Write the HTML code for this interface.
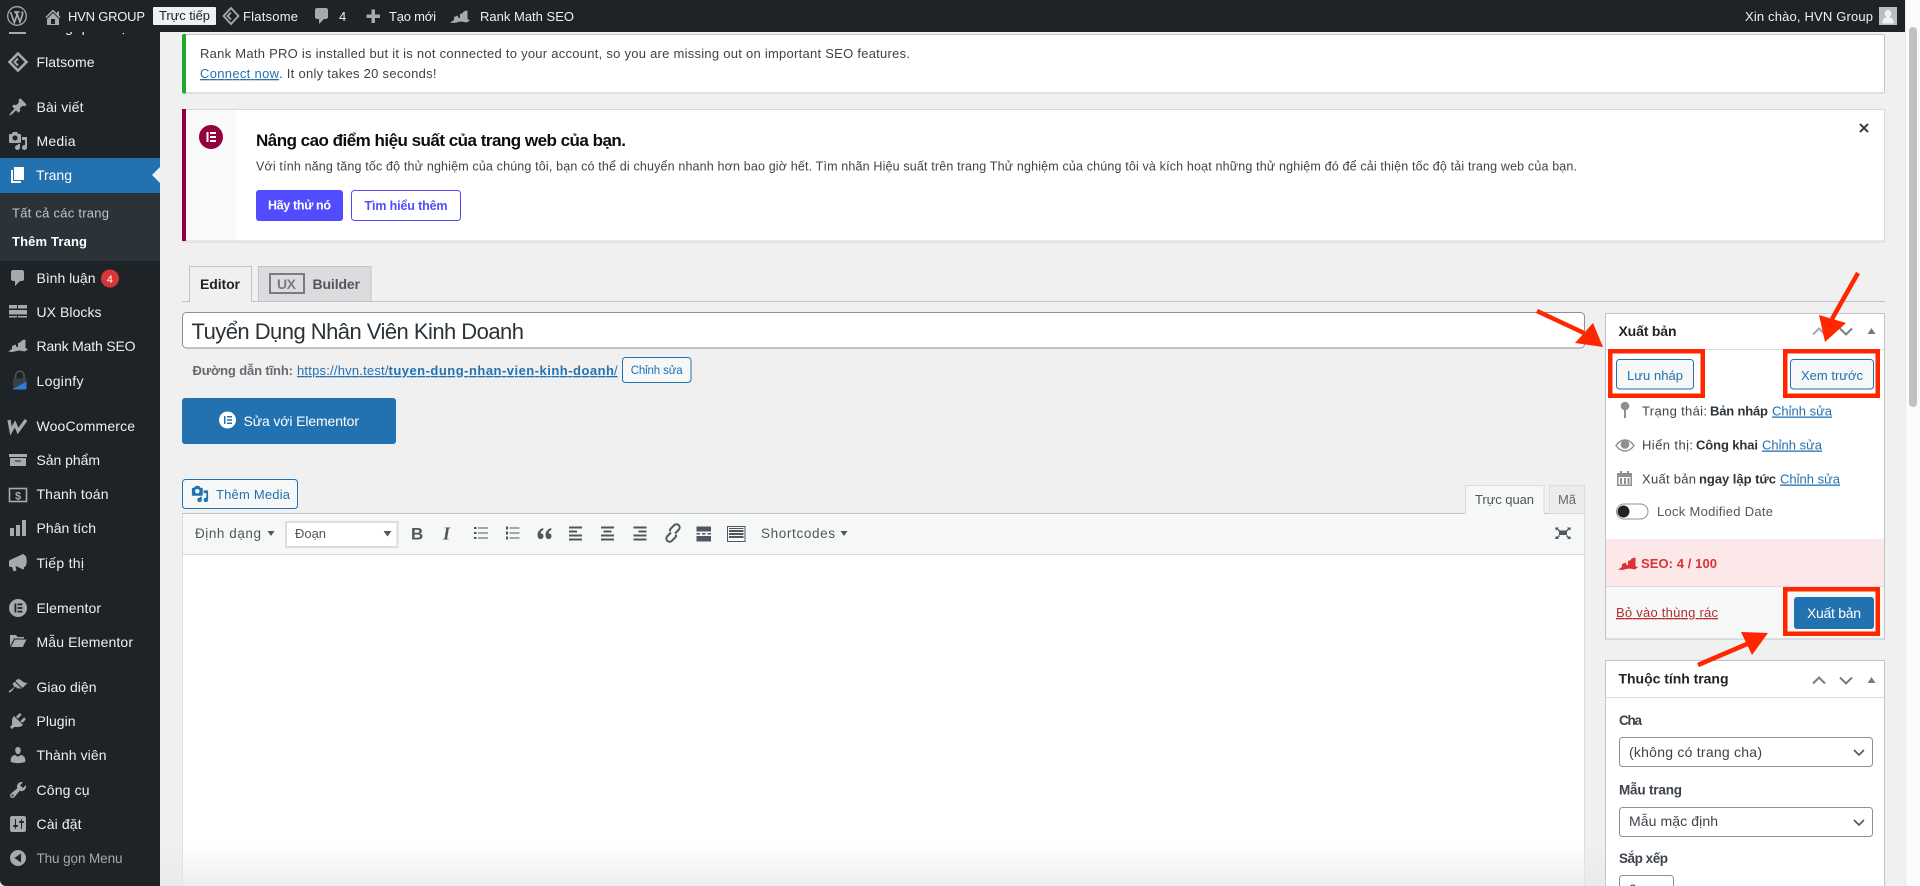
<!DOCTYPE html>
<html lang="vi">
<head>
<meta charset="utf-8">
<title>Thêm Trang</title>
<style>
html,body{margin:0;padding:0;width:1920px;height:886px;overflow:hidden;background:#f0f0f1}
svg{display:block}
text{font-family:"Liberation Sans","Noto Sans CJK SC",sans-serif;font-size:14px;fill:#3c434a}
.m{fill:#f0f0f1}
.bar{font-size:13px;fill:#f0f0f1}
.n{font-size:13px;fill:#3c434a}
.b{font-weight:bold}
.l{fill:#2271b1;text-decoration:underline}
.bt{fill:#2271b1;font-size:13px}
.ic{fill:#a7aaad}
.tb{fill:#50575e}
</style>
</head>
<body>
<svg width="1920" height="886" viewBox="0 0 1920 886" xmlns="http://www.w3.org/2000/svg">
<defs>
<linearGradient id="fade" x1="0" y1="0" x2="0" y2="1"><stop offset="0" stop-color="#e8e8e8" stop-opacity="0"/><stop offset="1" stop-color="#e8e8e8" stop-opacity=".75"/></linearGradient>
</defs>
<rect width="1920" height="886" fill="#f0f0f1"/>

<!-- sidebar -->
<rect x="0" y="0" width="160" height="886" fill="#1d2327"/>
<text class="m" x="36" y="32" textLength="89">Trang quản trị</text>
<rect x="9" y="30" width="17" height="4" class="ic"/>
<rect x="0" y="158" width="160" height="35" fill="#2271b1"/>
<polygon points="160,167 152,175 160,183" fill="#f0f0f1"/>
<rect x="0" y="193" width="160" height="68" fill="#2c3338"/>

<text class="m" x="36.5" y="67" textLength="58">Flatsome</text>
<text class="m" x="36.5" y="112" textLength="47">Bài viết</text>
<text class="m" x="36.5" y="146" textLength="39">Media</text>
<text x="36" y="180" textLength="36" style="fill:#fff">Trang</text>
<text x="12" y="217.5" textLength="97" style="font-size:13px;fill:#c3c4c7">Tất cả các trang</text>
<text x="12" y="246" textLength="75" class="b" style="font-size:13px;fill:#fff">Thêm Trang</text>
<text class="m" x="36.5" y="283" textLength="59">Bình luận</text>
<circle cx="110" cy="278.5" r="9" fill="#d63638"/>
<text x="106.8" y="283" textLength="6.5" style="font-size:11px;fill:#fff">4</text>
<text class="m" x="36.5" y="317" textLength="65">UX Blocks</text>
<text class="m" x="36.5" y="351" textLength="99">Rank Math SEO</text>
<text class="m" x="36.5" y="386" textLength="47">Loginfy</text>
<text class="m" x="36.5" y="431" textLength="98.5">WooCommerce</text>
<text class="m" x="36.5" y="465" textLength="63.5">Sản phẩm</text>
<text class="m" x="36.5" y="499" textLength="72">Thanh toán</text>
<text class="m" x="36.5" y="533" textLength="59.5">Phân tích</text>
<text class="m" x="36.5" y="568" textLength="47.5">Tiếp thị</text>
<text class="m" x="36.5" y="613" textLength="64.5">Elementor</text>
<text class="m" x="36.5" y="647" textLength="96.5">Mẫu Elementor</text>
<text class="m" x="36.5" y="692" textLength="60">Giao diện</text>
<text class="m" x="36.5" y="726" textLength="39">Plugin</text>
<text class="m" x="36.5" y="760" textLength="70">Thành viên</text>
<text class="m" x="36.5" y="795" textLength="53">Công cụ</text>
<text class="m" x="36.5" y="829" textLength="45">Cài đặt</text>
<text x="36.5" y="863" textLength="86" style="font-size:13.5px;fill:#a7aaad">Thu gọn Menu</text>

<!-- sidebar icons -->
<g fill="none" stroke="#a7aaad" stroke-width="2.600"><path d="M18 53.500l8.500 8.500-8.500 8.500-8.500-8.500z"/><path d="M18 58.500l-3.500 3.500 3.500 3.500" stroke-width="2"/></g>
<path class="ic" transform="translate(8,97)" d="M10.44 3.02l1.82-1.82 6.35 6.35-1.83 1.82c-1.05-.68-2.48-.57-3.41.36l-.75.75c-.92.93-1.04 2.35-.35 3.41l-1.83 1.82-2.41-2.41-2.8 2.79c-.42.42-3.38 2.71-3.8 2.29s1.86-3.39 2.28-3.81l2.79-2.79L4.1 9.36l1.83-1.82c1.05.69 2.48.57 3.41-.36l.75-.75c.93-.92 1.05-2.35.35-3.41z"/>
<path class="ic" transform="translate(8,131)" d="M13 11V4c0-.55-.45-1-1-1h-1.67L9 1H5L3.67 3H2c-.55 0-1 .45-1 1v7c0 .55.45 1 1 1h10c.55 0 1-.45 1-1zM7 4.5c1.38 0 2.5 1.12 2.5 2.5S8.38 9.5 7 9.5 4.5 8.38 4.5 7 5.62 4.5 7 4.5zM14 6h5v10.5c0 1.38-1.12 2.5-2.5 2.5S14 17.88 14 16.5s1.12-2.5 2.5-2.5c.17 0 .34.02.5.05V9h-3V6zm-4 8.05V13h2v3.5c0 1.38-1.12 2.5-2.5 2.5S7 17.88 7 16.5 8.12 14 9.5 14c.17 0 .34.02.5.05z"/>
<path transform="translate(8,165)" fill="#fff" d="M6 15V2h10v13H6zm-1 1h8v2H3V5h2v11z"/>
<path class="ic" transform="translate(8,268)" d="M5 2h9c1.1 0 2 .9 2 2v7c0 1.1-.9 2-2 2h-2l-5 5v-5H5c-1.1 0-2-.9-2-2V4c0-1.1.9-2 2-2z"/>
<g class="ic"><rect x="9" y="305" width="8" height="3.500"/><rect x="18" y="305" width="9" height="3.500"/><rect x="9" y="310" width="18" height="4.500"/><rect x="9" y="316" width="8" height="1.500"/><rect x="18" y="316" width="9" height="1.500"/></g>
<path class="ic" d="M8 351.500l4-2.500v-3l4-1.500v2l2 .5V343l3-1v-1l3-1.500 1.500.5v8l2.500 1.500-3.500 2-5-1-3 .5-4 1z"/>
<path fill="none" stroke="#4c5157" stroke-width="1.600" d="M15.500 379v-3.500a4.300 4.300 0 0 1 8.600 0V379"/>
<path fill="#3a3f44" d="M13 378.500h13.500V389H13z"/>
<path fill="#2c7fd4" d="M12 389.500l14.500-8v8z"/>
<path d="M9 420l2 11 4-7 3 7 8-11" fill="none" stroke="#a7aaad" stroke-width="3.200"/>
<path class="ic" d="M9 454h18v3H9zM10 458h16v8H10zM15 460.500v1h6v-1z" fill-rule="evenodd"/>
<rect x="9.500" y="488.500" width="17" height="13" fill="none" stroke="#a7aaad" stroke-width="1.600"/>
<text x="15" y="499.500" textLength="6" class="b" style="font-size:11px;fill:#a7aaad">$</text>
<path class="ic" transform="translate(8,518)" d="M18 18V2h-4v16h4zm-6 0V7H8v11h4zm-6 0v-8H2v8h4z"/>
<path class="ic" d="M10 560l13-6 1 .5v14.500l-1 .5-6.500-3.300-1 .2 1 4-3 1-1.500-4.500H10.500c-1 0-1.500-.5-1.500-1.500v-4c0-.5.500-1 1-1.400zM24 555c1.700 0 2.700 2.300 2.700 6s-1 6-2.700 6z"/>
<circle cx="18" cy="608" r="9" class="ic"/>
<g fill="#1d2327"><rect x="14.500" y="603.500" width="1.800" height="9"/><rect x="17.500" y="603.500" width="5" height="1.800"/><rect x="17.500" y="607.100" width="5" height="1.800"/><rect x="17.500" y="610.700" width="5" height="1.800"/></g>
<path class="ic" d="M10 635h6l1.500 2H24v1.500H14l-3.500 7L10 646zM14.800 639.500H26.500L22.800 647H11z"/>
<path class="ic" transform="translate(8,677)" d="M14.480 11.060L7.410 3.990l1.500-1.500c.5-.56 2.300-.47 3.510.32 1.210.8 1.430 1.280 2.910 2.100 1.180.64 2.450 1.260 4.450.85zm-.71.71L6.700 4.700 4.930 6.470c-.39.39-.39 1.020 0 1.410l1.060 1.060c.39.39.39 1.030 0 1.420-.6.6-1.430 1.110-2.210 1.690-.35.26-.7.53-1.010.84C1.430 13.230.44 14.790.93 15.280s2.050-.5 3.390-1.840c.31-.31.58-.66.84-1.010.58-.78 1.090-1.610 1.690-2.210.39-.39 1.030-.39 1.420 0l1.060 1.060c.39.39 1.020.39 1.410 0z"/>
<path class="ic" transform="translate(8,711)" d="M13.110 4.360L9.870 7.600 8 5.730l3.240-3.240c.35-.34 1.050-.2 1.560.32.52.51.66 1.210.31 1.550zm-8 1.770l.91-1.120 9.010 9.010-1.190.84c-.71.71-2.630 1.160-3.820 1.160H6.140L4.900 17.260c-.59.59-1.540.59-2.120 0-.59-.58-.59-1.530 0-2.120l1.240-1.240v-3.880c0-1.130.4-3.190 1.090-3.890zm7.260 3.970l3.240-3.240c.34-.35 1.040-.21 1.550.31.52.51.66 1.210.31 1.550l-3.240 3.250z"/>
<path class="ic" transform="translate(8,745)" d="M10 9.250c-2.270 0-2.730-3.440-2.730-3.440C7 4.020 7.820 2 9.970 2c2.160 0 2.980 2.020 2.710 3.810 0 0-.41 3.440-2.680 3.440zm0 2.570L12.720 10c2.390 0 4.520 2.330 4.520 4.530v2.490s-3.650 1.130-7.240 1.130c-3.650 0-7.240-1.130-7.240-1.130v-2.490c0-2.250 1.940-4.480 4.470-4.480z"/>
<path class="ic" transform="translate(8,780)" d="M16.680 9.770c-1.340 1.340-3.300 1.670-4.950.99l-5.410 6.520c-.99.99-2.590.99-3.580 0s-.99-2.590 0-3.570l6.520-5.420c-.68-1.650-.35-3.610.99-4.950 1.280-1.280 3.120-1.620 4.720-1.060l-2.890 2.890 2.820 2.820 2.860-2.870c.53 1.580.18 3.390-1.080 4.650zM3.810 16.210c.4.39 1.040.39 1.430 0 .4-.4.4-1.040 0-1.430-.39-.4-1.030-.4-1.430 0-.39.39-.39 1.030 0 1.430z"/>
<path class="ic" transform="translate(8,814)" d="M18 16V4c0-1.100-.9-2-2-2H4c-1.100 0-2 .9-2 2v12c0 1.100.9 2 2 2h12c1.100 0 2-.9 2-2zM8 11h1c.55 0 1 .45 1 1s-.45 1-1 1H8v1.500c0 .28-.22.5-.5.5s-.5-.22-.5-.5V13H6c-.55 0-1-.45-1-1s.45-1 1-1h1V5.500c0-.28.22-.5.5-.5s.5.22.5.5V11zm5-2h-1c-.55 0-1-.45-1-1s.45-1 1-1h1V5.500c0-.28.22-.5.5-.5s.5.22.5.5V7h1c.55 0 1 .45 1 1s-.45 1-1 1h-1v5.500c0 .28-.22.5-.5.5s-.5-.22-.5-.5V9z"/>
<path class="ic" fill-rule="evenodd" d="M18 850a8 8 0 1 0 0 16 8 8 0 0 0 0-16zM21 853.500v9L14.500 858z"/>
<path d="M0 880v6h6a6 6 0 0 1-6-6z" fill="#e6e6e6"/>

<!-- admin bar -->
<rect x="0" y="0" width="1905" height="32" fill="#1d2327"/>
<rect x="1905" y="0" width="15" height="886" fill="#fbfbfb"/>
<rect x="1905" y="0" width="1" height="886" fill="#e8e8e8"/>
<rect x="1909" y="27" width="8" height="380" rx="4" fill="#c1c1c1"/>
<g fill="none" stroke="#a7aaad"><circle cx="17" cy="16" r="9.300" stroke-width="1.300"/><path d="M10.500 12l3.800 10.500 2.700-7.500-1.300-3M14 12h5.500M16.500 12l3.500 10 2.500-7.500c.4-1.300-.3-2.300-1-2.800" stroke-width="1.700"/></g>
<path class="ic" transform="translate(43,7)" d="M16 8.500l1.530 1.530-1.060 1.060L10 4.620l-6.470 6.470-1.060-1.060L10 2.500l4 4v-2h2v4zm-6-2.460l6 5.990V18H4v-5.970zM12 17v-5H8v5h4z"/>
<text class="bar" x="68" y="21" textLength="77">HVN GROUP</text>
<rect x="153" y="7" width="63" height="18" rx="1" fill="#f0f0f1"/>
<text x="159" y="20" textLength="51" style="font-size:13px;fill:#1d2327">Trực tiếp</text>
<g fill="none" stroke="#a7aaad" stroke-width="1.800"><path d="M231 8l7.500 8-7.500 8-7.500-8z"/><path d="M231 12.500l-3.500 3.500 3.500 3.500"/></g>
<text class="bar" x="243" y="21" textLength="55">Flatsome</text>
<path class="ic" transform="translate(312,6)" d="M5 2h9c1.100 0 2 .9 2 2v7c0 1.100-.9 2-2 2h-2l-5 5v-5H5c-1.100 0-2-.9-2-2V4c0-1.100.9-2 2-2z"/>
<text class="bar" x="339" y="21" textLength="8">4</text>
<path class="ic" d="M371.500 9.500h3.500v5h5v3.500h-5v5h-3.500v-5h-5v-3.500h5z"/>
<text class="bar" x="389" y="21" textLength="47">Tạo mới</text>
<path class="ic" transform="translate(442,-329)" d="M8 351.500l4-2.500v-3l4-1.500v2l2 .5V343l3-1v-1l3-1.500 1.500.5v8l2.500 1.500-3.500 2-5-1-3 .5-4 1z"/>
<text class="bar" x="480" y="21" textLength="94">Rank Math SEO</text>
<text class="bar" x="1745" y="21" textLength="128">Xin chào, HVN Group</text>
<rect x="1879" y="7" width="18" height="18" fill="#bdbdbd"/>
<path fill="#f1f1f1" d="M1888 10c2 0 3.300 1.700 3.300 3.800 0 1.500-.8 2.800-1.800 3.500 2 .5 3.800 1.500 4 3.700v2.500h-11V21c.2-2.200 2-3.200 4-3.700-1-.7-1.800-2-1.800-3.500 0-2.100 1.300-3.800 3.300-3.800z"/>

<!-- notice 1 -->
<rect x="182.500" y="34.500" width="1702" height="58.500" rx="2" fill="#fff" stroke="#c3c4c7"/>
<path d="M186 34h-2a2 2 0 0 0-2 2v55.500a2 2 0 0 0 2 2h2z" fill="#1fa82d"/>
<text class="n" x="200" y="58" textLength="710">Rank Math PRO is installed but it is not connected to your account, so you are missing out on important SEO features.</text>
<text x="200" y="78" textLength="79" class="l" style="font-size:13px">Connect now</text>
<text class="n" x="279" y="78" textLength="157.500">. It only takes 20 seconds!</text>

<!-- notice 2 -->
<rect x="182.500" y="109.500" width="1702" height="131.500" fill="#fff" stroke="#d6d7d9"/>
<rect x="186" y="110" width="50" height="130.500" fill="#f9f9f9"/>
<rect x="182" y="109" width="4" height="132.500" fill="#93003f"/>
<rect x="182" y="241" width="1703" height="2" fill="#e3e3e3"/>
<circle cx="211" cy="137" r="12" fill="#93003f"/>
<g fill="#fff"><rect x="206.500" y="132" width="2" height="10"/><rect x="210" y="132" width="6" height="2"/><rect x="210" y="136" width="6" height="2"/><rect x="210" y="140" width="6" height="2"/></g>
<text x="256" y="146" textLength="370" class="b" style="font-size:17px;fill:#0c0d0e">Nâng cao điểm hiệu suất của trang web của bạn.</text>
<text x="256" y="170.500" textLength="1321" style="font-size:12.500px;fill:#3f444b">Với tính năng tăng tốc độ thử nghiệm của chúng tôi, bạn có thể di chuyển nhanh hơn bao giờ hết. Tìm nhãn Hiệu suất trên trang Thử nghiệm của chúng tôi và kích hoạt những thử nghiệm đó để cải thiện tốc độ tải trang web của bạn.</text>
<rect x="256" y="190" width="87" height="31" rx="3" fill="#524cff"/>
<text x="268" y="209.500" textLength="63" class="b" style="font-size:12.500px;fill:#fff">Hãy thử nó</text>
<rect x="351.500" y="190.500" width="109" height="30" rx="3" fill="#fff" stroke="#524cff"/>
<text x="364.500" y="210" textLength="83" style="font-size:12.500px;fill:#524cff;font-weight:bold">Tìm hiểu thêm</text>
<path d="M1860 124l8 8M1868 124l-8 8" stroke="#2b2f33" stroke-width="1.800" fill="none"/>

<!-- editor/builder tabs -->
<path d="M182 301.500H1885" stroke="#c3c4c7"/>
<path d="M189.500 302V266.500H251.500V302" fill="#f0f0f1" stroke="#c3c4c7"/>
<rect x="190" y="299" width="61" height="3" fill="#f0f0f1"/>
<rect x="258.500" y="266.500" width="112.500" height="35" fill="#dcdcde" stroke="#c3c4c7"/>
<text x="200" y="289" textLength="40" class="b" style="fill:#1d2327">Editor</text>
<rect x="270" y="274" width="34" height="19" fill="none" stroke="#787c82" stroke-width="2"/>
<text x="277" y="289" textLength="19" class="b" style="fill:#787c82">UX</text>
<text x="312.500" y="289" textLength="47.500" class="b" style="fill:#50575e">Builder</text>

<!-- title -->
<rect x="182.500" y="312.500" width="1402" height="35.500" rx="4" fill="#fff" stroke="#8c8f94"/>
<text x="191.500" y="339" textLength="332.500" style="font-size:22px;fill:#2c3338">Tuyển Dụng Nhân Viên Kinh Doanh</text>
<text x="192.500" y="375" textLength="100.500" class="b" style="font-size:13px;fill:#646970">Đường dẫn tĩnh:</text>
<text x="297" y="375" textLength="91.500" class="l" style="font-size:13px">https://hvn.test/</text>
<text x="388.500" y="375" textLength="225.500" class="l b" style="font-size:13px">tuyen-dung-nhan-vien-kinh-doanh</text>
<text x="614" y="375" textLength="4.500" class="l" style="font-size:13px">/</text>
<rect x="622.500" y="357.500" width="68.500" height="25" rx="3" fill="#f6f7f7" stroke="#2271b1"/>
<text x="630.700" y="374" textLength="52" style="font-size:11.500px;fill:#2271b1">Chỉnh sửa</text>

<rect x="182" y="398" width="214" height="46" rx="3" fill="#2271b1"/>
<circle cx="227.500" cy="420" r="8.500" fill="#fff"/>
<g fill="#2271b1"><rect x="224" y="416" width="1.500" height="8"/><rect x="227" y="416" width="5" height="1.500"/><rect x="227" y="419.250" width="5" height="1.500"/><rect x="227" y="422.500" width="5" height="1.500"/></g>
<text x="243.500" y="426" textLength="115.500" style="fill:#fff">Sửa với Elementor</text>

<!-- media -->
<rect x="182.500" y="479.500" width="115" height="29" rx="3" fill="#f6f7f7" stroke="#2271b1"/>
<path fill="#2271b1" transform="translate(191,485) scale(.9)" d="M13 11V4c0-.55-.45-1-1-1h-1.670L9 1H5L3.670 3H2c-.55 0-1 .45-1 1v7c0 .55.45 1 1 1h10c.55 0 1-.45 1-1zM7 4.500c1.380 0 2.500 1.120 2.500 2.500S8.380 9.500 7 9.500 4.500 8.380 4.500 7 5.620 4.500 7 4.500zM14 6h5v10.500c0 1.380-1.120 2.500-2.500 2.500S14 17.880 14 16.500s1.120-2.500 2.500-2.500c.17 0 .34.020.5.050V9h-3V6zm-4 8.050V13h2v3.500c0 1.380-1.120 2.500-2.500 2.500S7 17.880 7 16.500 8.120 14 9.500 14c.17 0 .34.020.5.050z"/>
<text x="216" y="499" textLength="74" class="bt">Thêm Media</text>

<!-- editor -->
<rect x="182.500" y="513.500" width="1402" height="400" fill="#fff" stroke="#dcdcde"/>
<rect x="182.500" y="513.500" width="1402" height="41" fill="#f6f7f7" stroke="#dcdcde"/>
<path d="M182 513.500H1585" stroke="#c3c4c7"/>
<rect x="1465.500" y="485.500" width="78.500" height="28" fill="#f6f7f7" stroke="#dcdcde"/>
<rect x="1466" y="512" width="78" height="2.500" fill="#f6f7f7"/>
<rect x="1549.500" y="485.500" width="35" height="28" fill="#ebebeb" stroke="#dcdcde"/>
<text x="1475" y="504" textLength="59" style="font-size:13px;fill:#50575e">Trực quan</text>
<text x="1558" y="504" textLength="18" style="font-size:13px;fill:#646970">Mã</text>

<text x="195" y="538" textLength="66" style="font-size:13.500px;fill:#50575e">Định dạng</text>
<path class="tb" d="M267.500 531h7l-3.500 5z"/>
<rect x="286" y="522" width="111.500" height="25" fill="#fff" stroke="#dcdcde" stroke-width="2"/>
<text x="295" y="538" textLength="31" style="font-size:13px;fill:#50575e">Đoạn</text>
<path class="tb" d="M383.500 531h8l-4 5.500z"/>
<text x="411" y="539.500" textLength="10" class="b tb" style="font-size:17px">B</text>
<text x="443" y="539.500" textLength="7" class="tb" style="font-family:'Liberation Serif',serif;font-style:italic;font-weight:bold;font-size:18px">I</text>
<g class="tb">
<rect x="474" y="527" width="2.500" height="2"/><rect x="474" y="532" width="2.500" height="2"/><rect x="474" y="537" width="2.500" height="2"/>
<rect x="478" y="527.500" width="10" height="1"/><rect x="478" y="532.500" width="10" height="1"/><rect x="478" y="537.500" width="10" height="1"/>
<rect x="506" y="526.500" width="2" height="3"/><rect x="506" y="531.500" width="2" height="3"/><rect x="506" y="536.500" width="2" height="3"/>
<rect x="509.500" y="527.500" width="10" height="1"/><rect x="509.500" y="532.500" width="10" height="1"/><rect x="509.500" y="537.500" width="10" height="1"/>
<path d="M543 528c-3 1-5.500 3.500-5.500 7 0 2.500 1.200 4 3 4s3-1.200 3-2.800-1-2.800-2.500-2.800h-.5c.2-1.500 1.300-3 3-3.700zM551 528c-3 1-5.500 3.500-5.500 7 0 2.500 1.200 4 3 4s3-1.200 3-2.800-1-2.800-2.500-2.800h-.5c.2-1.500 1.300-3 3-3.700z"/>
<rect x="569" y="526.500" width="13" height="2"/><rect x="569" y="530.500" width="8" height="2"/><rect x="569" y="534.500" width="13" height="2"/><rect x="569" y="538.500" width="13" height="2"/>
<rect x="601" y="526.500" width="13" height="2"/><rect x="603.500" y="530.500" width="8" height="2"/><rect x="601" y="534.500" width="13" height="2"/><rect x="601" y="538.500" width="13" height="2"/>
<rect x="633.500" y="526.500" width="13" height="2"/><rect x="638.500" y="530.500" width="8" height="2"/><rect x="633.500" y="534.500" width="13" height="2"/><rect x="633.500" y="538.500" width="13" height="2"/>
<rect x="696.500" y="526.500" width="14.500" height="5"/><rect x="696.500" y="533" width="3.500" height="1.500"/><rect x="702" y="533" width="3.500" height="1.500"/><rect x="707.500" y="533" width="3.500" height="1.500"/><rect x="696.500" y="536" width="14.500" height="5.500"/>
</g>
<g fill="none" stroke="#50575e" stroke-width="2"><path d="M671 532.500l-3.500 3.500c-1.500 1.500-1.500 3.500-.2 4.800s3.300 1.300 4.800-.2l3-3c.9-.9 1.100-2 .7-3"/><path d="M675 533.500l3.500-3.500c1.500-1.500 1.500-3.500.2-4.800s-3.300-1.300-4.800.2l-3 3c-.9.9-1.100 2-.7 3"/></g>
<g><rect x="727.500" y="526.500" width="17.500" height="15" fill="none" stroke="#50575e"/>
<rect x="729" y="528" width="14.500" height="1" fill="#50575e"/><rect x="729" y="530" width="14.500" height="2" fill="#50575e"/><rect x="729" y="533" width="14.500" height="2" fill="#50575e"/><rect x="729" y="536" width="14.500" height="2" fill="#50575e"/></g>
<text x="761" y="538" textLength="74" style="font-size:13.500px;fill:#50575e">Shortcodes</text>
<path class="tb" d="M840.500 531h7l-3.500 5z"/>
<g class="tb"><rect x="1559" y="530.500" width="8" height="4.500"/><path d="M1555 527.500h4l-1 1 2 2-1 1-2-2-1 1zM1571 527.500h-4l1 1-2 2 1 1 2-2 1 1zM1555 539h4l-1-1 2-2-1-1-2 2-1-1zM1571 539h-4l1-1-2-2 1-1 2 2 1-1z"/></g>

<rect x="160" y="845" width="1445" height="41" fill="url(#fade)"/>

<!-- publish box -->
<rect x="1605.500" y="313.500" width="279" height="325.500" fill="#fff" stroke="#c3c4c7"/>
<path d="M1606 349.500H1884" stroke="#dcdcde"/>
<text x="1618.500" y="336" textLength="58" class="b" style="fill:#1d2327">Xuất bản</text>
<g fill="none" stroke="#a7aaad" stroke-width="2"><path d="M1813 334.500l6-6 6 6"/></g>
<g fill="none" stroke="#787c82" stroke-width="2"><path d="M1840 328.500l6 6 6-6"/></g>
<path d="M1867.500 334h8l-4-6z" fill="#787c82"/>

<rect x="1616.500" y="359.500" width="77" height="29.500" rx="3" fill="#f6f7f7" stroke="#2271b1"/>
<text x="1627" y="380" textLength="56" class="bt">Lưu nháp</text>
<rect x="1790.500" y="359.500" width="83" height="29.500" rx="3" fill="#f6f7f7" stroke="#2271b1"/>
<text x="1801" y="380" textLength="62" class="bt">Xem trước</text>

<circle cx="1625" cy="406" r="4.300" fill="#8c8f94"/><rect x="1624" y="409" width="2" height="9" fill="#8c8f94"/>
<text class="n" x="1642" y="415.500" textLength="65">Trạng thái:</text>
<text class="n b" x="1710" y="415.500" textLength="58" style="fill:#2c3338">Bản nháp</text>
<text x="1772" y="415.500" textLength="60" class="l" style="font-size:13px">Chỉnh sửa</text>

<path d="M1616 445.500c2.500-3.500 5.500-5.500 9-5.500s6.500 2 9 5.500c-2.500 3.500-5.500 5.500-9 5.500s-6.500-2-9-5.500z" fill="none" stroke="#8c8f94" stroke-width="1.400"/><circle cx="1625" cy="444.500" r="4.300" fill="#8c8f94"/>
<text class="n" x="1642" y="449.500" textLength="51">Hiển thị:</text>
<text class="n b" x="1696" y="449.500" textLength="62" style="fill:#2c3338">Công khai</text>
<text x="1762" y="449.500" textLength="60" class="l" style="font-size:13px">Chỉnh sửa</text>

<g fill="#8c8f94"><path d="M1617 473h15v13h-15zM1618.500 477v7.500h12V477z" fill-rule="evenodd"/><rect x="1620" y="471" width="2" height="4"/><rect x="1627" y="471" width="2" height="4"/><rect x="1620" y="478" width="2" height="6"/><rect x="1624" y="478" width="2" height="6"/><rect x="1627.500" y="478" width="2" height="6"/></g>
<text class="n" x="1642" y="483.500" textLength="54">Xuất bản</text>
<text class="n b" x="1699" y="483.500" textLength="77" style="fill:#2c3338">ngay lập tức</text>
<text x="1780" y="483.500" textLength="60" class="l" style="font-size:13px">Chỉnh sửa</text>

<rect x="1616.500" y="504" width="31.500" height="15" rx="7.500" fill="#fff" stroke="#8c8f94"/>
<circle cx="1623.500" cy="511.500" r="6" fill="#1d2327"/>
<text class="n" x="1657" y="516" textLength="116" style="fill:#50575e">Lock Modified Date</text>

<rect x="1606" y="539" width="278" height="47" fill="#fce8e8"/>
<path fill="#dc3232" transform="translate(1610,218)" d="M8 351.500l4-2.500v-3l4-1.500v2l2 .5V343l3-1v-1l3-1.500 1.500.5v8l2.500 1.500-3.500 2-5-1-3 .5-4 1z"/>
<text x="1641" y="568" textLength="76" class="b" style="font-size:13px;fill:#dc3232">SEO: 4 / 100</text>

<rect x="1606" y="587" width="278" height="51.500" fill="#f6f7f7"/>
<path d="M1606 586.500H1884" stroke="#dcdcde"/>
<text x="1616" y="617" textLength="102" class="n" style="fill:#b32d2e;text-decoration:underline">Bỏ vào thùng rác</text>
<rect x="1794" y="597" width="80" height="32" rx="3" fill="#2271b1"/>
<text x="1807" y="618" textLength="54" style="fill:#fff">Xuất bản</text>

<!-- page attributes -->
<rect x="1605.500" y="660.500" width="279" height="240" fill="#fff" stroke="#c3c4c7"/>
<path d="M1606 697.500H1884" stroke="#dcdcde"/>
<text x="1618.500" y="683.500" textLength="110" class="b" style="fill:#1d2327">Thuộc tính trang</text>
<g fill="none" stroke="#787c82" stroke-width="2"><path d="M1813 683.500l6-6 6 6M1840 677.500l6 6 6-6"/></g>
<path d="M1867.500 683h8l-4-6z" fill="#787c82"/>
<text x="1619" y="725" textLength="23" class="b" style="fill:#3c434a;font-size:13.500px">Cha</text>
<rect x="1619.500" y="737.500" width="253" height="29" rx="3" fill="#fff" stroke="#8c8f94"/>
<text x="1629" y="757" textLength="133">(không có trang cha)</text>
<path d="M1854 750l5 5 5-5" fill="none" stroke="#50575e" stroke-width="1.600"/>
<text x="1619" y="794.500" textLength="63" class="b" style="fill:#3c434a;font-size:13.500px">Mẫu trang</text>
<rect x="1619.500" y="807.500" width="253" height="29" rx="3" fill="#fff" stroke="#8c8f94"/>
<text x="1629" y="826" textLength="89">Mẫu mặc định</text>
<path d="M1854 820l5 5 5-5" fill="none" stroke="#50575e" stroke-width="1.600"/>
<text x="1619" y="863" textLength="49" class="b" style="fill:#3c434a;font-size:13.500px">Sắp xếp</text>
<rect x="1619.500" y="875.500" width="54" height="30" rx="3" fill="#fff" stroke="#8c8f94"/>
<text x="1629" y="894" textLength="8">0</text>

<!-- annotations -->
<g fill="none" stroke="#ff2600" stroke-width="4.500">
<rect x="1610.250" y="351.250" width="92.500" height="44.500"/>
<rect x="1785.250" y="351.250" width="92.500" height="44.500"/>
<rect x="1785.250" y="589.250" width="92.500" height="44.500"/>
</g>
<g stroke="#ff2600" stroke-width="4.500" fill="#ff2600">
<path d="M1537 311L1584 333" fill="none"/>
<path d="M1858 273L1832 319" fill="none"/>
<path d="M1698 665L1747 644" fill="none"/>
</g>
<g fill="#ff2600">
<polygon points="1603,347 1575,343 1593,323"/>
<polygon points="1825,342 1819,315 1846,323"/>
<polygon points="1768,633 1741,632 1752,655"/>
</g>
</svg>
</body>
</html>
